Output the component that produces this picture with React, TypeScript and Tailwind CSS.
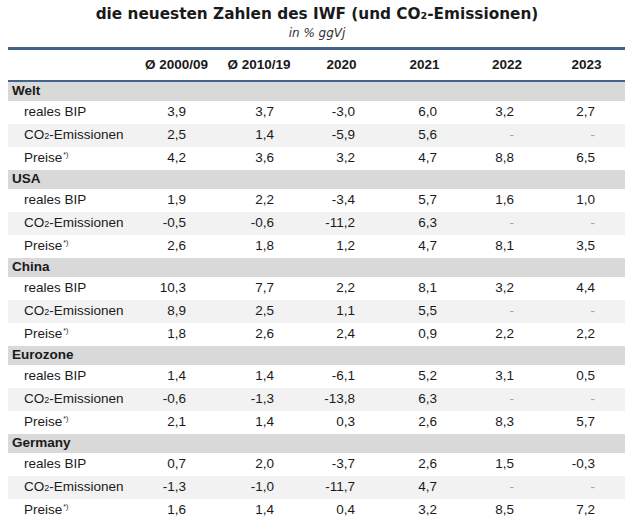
import React from "react";

type Row = { label: React.ReactNode; values: string[] };
type Group = { name: string; rows: Row[] };

const co2 = (
  <>
    CO<span className="text-[9px]">2</span>-Emissionen
  </>
);
const preise = (
  <>
    Preise<sup className="top-[-0.7em] ml-[1px] text-[7px]">*)</sup>
  </>
);

const groups: Group[] = [
  {
    name: "Welt",
    rows: [
      { label: "reales BIP", values: ["3,9", "3,7", "-3,0", "6,0", "3,2", "2,7"] },
      { label: co2, values: ["2,5", "1,4", "-5,9", "5,6", "-", "-"] },
      { label: preise, values: ["4,2", "3,6", "3,2", "4,7", "8,8", "6,5"] },
    ],
  },
  {
    name: "USA",
    rows: [
      { label: "reales BIP", values: ["1,9", "2,2", "-3,4", "5,7", "1,6", "1,0"] },
      { label: co2, values: ["-0,5", "-0,6", "-11,2", "6,3", "-", "-"] },
      { label: preise, values: ["2,6", "1,8", "1,2", "4,7", "8,1", "3,5"] },
    ],
  },
  {
    name: "China",
    rows: [
      { label: "reales BIP", values: ["10,3", "7,7", "2,2", "8,1", "3,2", "4,4"] },
      { label: co2, values: ["8,9", "2,5", "1,1", "5,5", "-", "-"] },
      { label: preise, values: ["1,8", "2,6", "2,4", "0,9", "2,2", "2,2"] },
    ],
  },
  {
    name: "Eurozone",
    rows: [
      { label: "reales BIP", values: ["1,4", "1,4", "-6,1", "5,2", "3,1", "0,5"] },
      { label: co2, values: ["-0,6", "-1,3", "-13,8", "6,3", "-", "-"] },
      { label: preise, values: ["2,1", "1,4", "0,3", "2,6", "8,3", "5,7"] },
    ],
  },
  {
    name: "Germany",
    rows: [
      { label: "reales BIP", values: ["0,7", "2,0", "-3,7", "2,6", "1,5", "-0,3"] },
      { label: co2, values: ["-1,3", "-1,0", "-11,7", "4,7", "-", "-"] },
      { label: preise, values: ["1,6", "1,4", "0,4", "3,2", "8,5", "7,2"] },
    ],
  },
];

const headers = ["Ø 2000/09", "Ø 2010/19", "2020", "2021", "2022", "2023"];

// right padding per column so the numbers sit where the source puts them
const pads = ["pr-[32px]", "pr-[26px]", "pr-[28px]", "pr-[29px]", "pr-[34px]", "pr-[30px]"];

const grid = "grid grid-cols-[127px_83px_82px_83px_83px_82px_77px]";

export default function App() {
  return (
    <div className="w-[634px] h-[522px] overflow-hidden bg-white text-[#1a1a1a] [font-family:'Liberation_Sans',Arial,sans-serif]">
      <div className="pt-[4px] text-center">
        <h1 className="text-[15.3px] font-bold leading-[20px] [font-family:'DejaVu_Sans',Verdana,sans-serif]">
          die neuesten Zahlen des IWF (und CO₂-Emissionen)
        </h1>
        <p className="mt-[1px] text-[12px] italic leading-[16px] text-[#333] [font-family:'DejaVu_Sans',Verdana,sans-serif]">
          in % ggVj
        </p>
      </div>

      <div className="ml-[8px] mt-[6px] w-[617px]">
        <div className={`${grid} h-[35px] items-center border-t-[3px] border-b-2 border-[#44628a] text-[13.5px] font-bold`}>
          <div />
          {headers.map((h) => (
            <div key={h} className="text-center">
              {h}
            </div>
          ))}
        </div>

        {groups.map((g) => (
          <div key={g.name}>
            <div className="flex h-[19px] items-center bg-[#d9d9d9] pl-[4px] text-[13.5px] font-bold">
              {g.name}
            </div>
            {g.rows.map((r, i) => (
              <div
                key={i}
                className={`${grid} h-[23px] items-center text-[13.5px] ${i === 1 ? "bg-[#f2f2f2]" : ""}`}
              >
                <div className="pl-[16px]">{r.label}</div>
                {r.values.map((v, j) => (
                  <div key={j} className={`text-right ${pads[j]} ${v === "-" ? "text-[#a0a0a0]" : ""}`}>
                    {v}
                  </div>
                ))}
              </div>
            ))}
          </div>
        ))}
      </div>
    </div>
  );
}
